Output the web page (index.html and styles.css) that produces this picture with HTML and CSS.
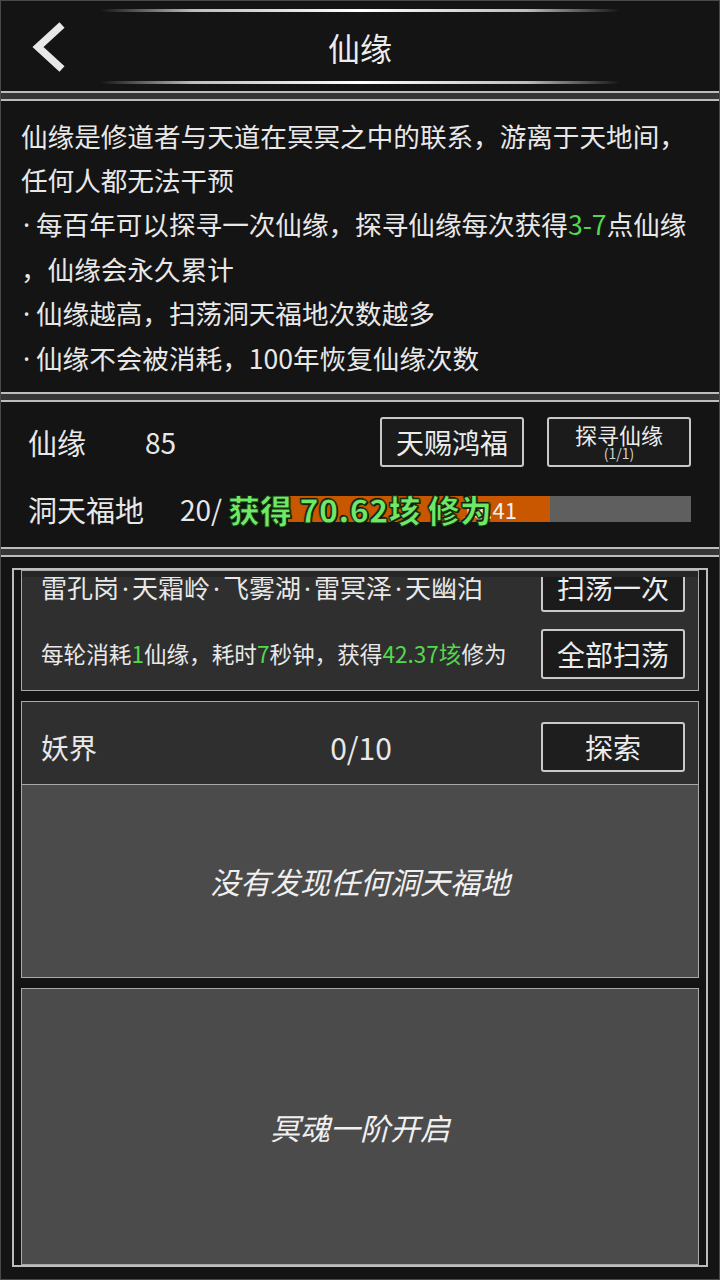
FILE: index.html
```html
<!DOCTYPE html>
<html lang="zh-CN">
<head>
  <meta charset="UTF-8">
  <meta name="viewport" content="width=device-width, initial-scale=1.0">
  <title>仙缘</title>
  <link rel="stylesheet" href="styles.css">
</head>
<body>
  <div class="page">
    <!-- Title bar -->
    <header class="header">
      <div class="glow-line"></div>
      <div class="title-row">
        <button class="back" aria-label="返回">
          <svg width="36" height="50" viewBox="0 0 36 50">
            <polyline points="31,3 7,25 31,47" fill="none" stroke="#e8e8e8" stroke-width="7.5" stroke-linejoin="miter"/>
          </svg>
        </button>
        <h1 class="title">仙缘</h1>
        <span></span>
      </div>
      <div class="glow-line"></div>
    </header>

    <div class="sep"></div>

    <!-- Description -->
    <section class="info">
      <div class="line">仙缘是修道者与天道在冥冥之中的联系，游离于天地间，</div>
      <div class="line">任何人都无法干预</div>
      <div class="line"><span class="dot">·</span>每百年可以探寻一次仙缘，探寻仙缘每次获得<span class="green">3-7</span>点仙缘</div>
      <div class="line">，仙缘会永久累计</div>
      <div class="line"><span class="dot">·</span>仙缘越高，扫荡洞天福地次数越多</div>
      <div class="line"><span class="dot">·</span>仙缘不会被消耗，100年恢复仙缘次数</div>
    </section>

    <div class="sep"></div>

    <!-- Stats -->
    <section class="stats">
      <div class="stat-row">
        <span class="stat-label">仙缘</span>
        <span class="stat-value">85</span>
        <div class="stat-actions">
          <button class="btn">天赐鸿福</button>
          <button class="btn btn-small">探寻仙缘<small>(1/1)</small></button>
        </div>
      </div>
      <div class="stat-row">
        <span class="stat-label wide">洞天福地</span>
        <span class="stat-value">20/</span>
        <div class="bar">
          <div class="bar-fill" style="width: 65%"></div>
          <span class="bar-text">13.41</span>
        </div>
      </div>
      <div class="toast">获得 70.62垓 修为</div>
    </section>

    <div class="sep"></div>

    <!-- Places -->
    <main class="main">
      <div class="frame">
        <div class="card sweep">
          <div class="sweep-gap"></div>
          <div class="sweep-clip">
            <div class="sweep-inner">
              <div class="sweep-row">
                <span class="places">雷孔岗<span class="pdot">·</span>天霜岭<span class="pdot">·</span>飞雾湖<span class="pdot">·</span>雷冥泽<span class="pdot">·</span>天幽泊</span>
                <button class="btn">扫荡一次</button>
              </div>
              <div class="sweep-row">
                <span class="cost">每轮消耗<span class="green">1</span>仙缘，耗时<span class="green">7</span>秒钟，获得<span class="green">42.37垓</span>修为</span>
                <button class="btn">全部扫荡</button>
              </div>
            </div>
          </div>
        </div>

        <div class="realm">
          <div class="card realm-head">
            <span class="realm-name">妖界</span>
            <span class="realm-count">0/10</span>
            <button class="btn">探索</button>
          </div>
          <div class="box empty">没有发现任何洞天福地</div>
        </div>

        <div class="box locked">冥魂一阶开启</div>
      </div>
    </main>
  </div>
</body>
</html>
```

FILE: styles.css
```css
/* Base */
body {
  margin: 0;
  background-color: #141414;
  color: #e8e8e8;
  font-family: "Noto Sans CJK SC", "Noto Sans", sans-serif;
}

.page {
  width: 720px;
  height: 1280px;
  box-sizing: border-box;
  border: 1px solid #4a4a4a;
  display: flex;
  flex-direction: column;
}

.green {
  color: #52d84c;
}

/* Narrow middle dots (the CJK font draws them full width) */
.dot {
  display: inline-block;
  width: 15px;
  padding-left: 2px;
  box-sizing: border-box;
  font-family: "Noto Sans", sans-serif;
}

.pdot {
  font-family: "Noto Sans", sans-serif;
  margin: 0 3px;
}

/* Header */
.header {
  height: 90px;
  display: flex;
  flex-direction: column;
  justify-content: space-between;
  padding: 8px 0 7px;
  box-sizing: border-box;
}

.glow-line {
  width: 520px;
  height: 3px;
  margin: 0 auto;
  background: linear-gradient(to right, rgba(255,255,255,0), #bdbdbd 18%, #ffffff 50%, #bdbdbd 82%, rgba(255,255,255,0));
}

.title-row {
  display: grid;
  grid-template-columns: 1fr auto 1fr;
  align-items: center;
}

.back {
  justify-self: start;
  margin-left: 30px;
  padding: 0;
  background: none;
  border: none;
  display: flex;
}

.title {
  margin: 0;
  font-size: 32px;
  font-weight: normal;
  line-height: 1;
  color: #ededed;
}

/* Separator strip between panels */
.sep {
  height: 10px;
  box-sizing: border-box;
  background-color: #363636;
  border-top: 2px solid #bdbdbd;
  border-bottom: 2px solid #bdbdbd;
}

/* Description panel */
.info {
  height: 291px;
  box-sizing: border-box;
  padding: 13px 0 0 20px;
  font-size: 26.6px;
  line-height: 44px;
  white-space: nowrap;
}

/* Stats panel */
.stats {
  position: relative;
  height: 145px;
  box-sizing: border-box;
  padding: 15px 28px 0 27px;
  display: flex;
  flex-direction: column;
  gap: 17px;
}

.stat-row {
  height: 50px;
  display: flex;
  align-items: center;
  font-size: 29px;
}

.stat-label {
  width: 117px;
}

.stat-label.wide {
  width: 152px;
}

.stat-value {
  font-size: 28px;
}

.stat-actions {
  margin-left: auto;
  display: flex;
  gap: 23px;
}

.btn {
  width: 144px;
  height: 50px;
  box-sizing: border-box;
  border: 2px solid #c9c9c9;
  border-radius: 3px;
  background-color: #1b1b1b;
  color: #ececec;
  font-family: inherit;
  font-size: 28px;
  line-height: 1;
  padding: 0;
  flex-shrink: 0;
}

.btn-small {
  font-size: 22px;
  display: flex;
  flex-direction: column;
  align-items: center;
  justify-content: center;
  line-height: 1.05;
}

.btn-small small {
  font-size: 14px;
  color: #d0d0d0;
}

.bar {
  position: relative;
  margin-left: auto;
  width: 403px;
  height: 26px;
  background-color: #5f5f5f;
  display: flex;
  align-items: center;
  justify-content: center;
}

.bar-fill {
  position: absolute;
  left: 0;
  top: 0;
  bottom: 0;
  background-color: #c85700;
}

.bar-text {
  position: relative;
  font-size: 22px;
  color: #f2f2f2;
}

/* Floating reward text */
.toast {
  position: absolute;
  left: 227px;
  top: 84px;
  font-size: 32px;
  font-weight: 900;
  color: #6ee866;
  -webkit-text-stroke: 1px #143010;
  text-shadow: 0 0 2px #000, 1px 1px 0 #0b1a06, -1px -1px 0 #0b1a06;
  white-space: nowrap;
}

/* Main list */
.main {
  flex: 1;
  padding: 11px 11px 12px;
  display: flex;
}

.frame {
  flex: 1;
  border: 2px solid #bdbdbd;
  padding: 0 7px;
  display: flex;
  flex-direction: column;
  gap: 10px;
}

.card {
  background-color: #2f2f2f;
  border: 1px solid #a9a9a9;
}

.sweep {
  height: 121px;
  box-sizing: border-box;
  display: flex;
  flex-direction: column;
}

.sweep-gap {
  height: 6px;
  background-color: #262626;
}

.sweep-clip {
  flex: 1;
  overflow: hidden;
}

.sweep-inner {
  margin-top: -24px;
  padding: 0 13px 0 19px;
}

.sweep-row {
  height: 67px;
  display: flex;
  align-items: center;
  justify-content: space-between;
}

.places {
  font-size: 26px;
}

.cost {
  font-size: 22.6px;
}

.realm {
  display: flex;
  flex-direction: column;
}

.realm-head {
  height: 84px;
  box-sizing: border-box;
  padding: 8px 13px 0 19px;
  display: grid;
  grid-template-columns: 1fr auto 1fr;
  align-items: center;
  font-size: 28px;
}

.realm-count {
  font-size: 30px;
  margin-right: 4px;
}

.realm-head .btn {
  justify-self: end;
  background-color: #1e1e1e;
}

.box {
  background-color: #4b4b4b;
  border: 1px solid #a9a9a9;
  display: flex;
  align-items: center;
  justify-content: center;
  font-size: 30px;
  font-style: italic;
  color: #f0f0f0;
}

.empty {
  height: 193px;
  box-sizing: border-box;
  border-top: none;
}

.locked {
  flex: 1;
}
```
